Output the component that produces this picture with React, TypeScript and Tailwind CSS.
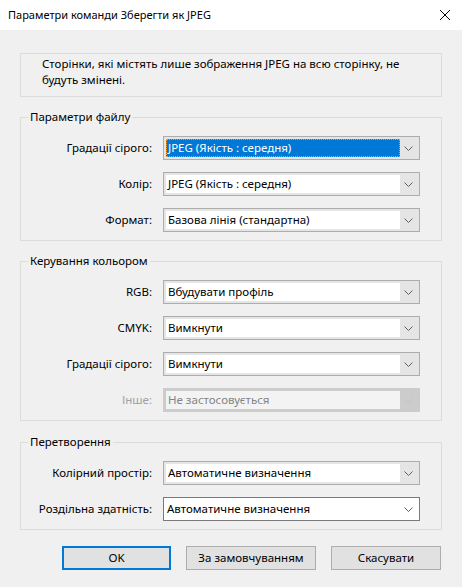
import React from 'react'

type Kind = 'normal' | 'focused' | 'disabled' | 'edit'

const font = { fontFamily: '"Segoe UI", "Noto Sans", sans-serif' }

// little down chevron used by every combo box
const Chevron = ({ color }: { color: string }) => (
  <svg width="9" height="5" viewBox="0 0 9 5" className="block">
    <path d="M0.5 0.5 L4.5 4.5 L8.5 0.5" fill="none" stroke={color} strokeWidth="1" />
  </svg>
)

const Combo = ({ value, kind = 'normal' }: { value: string; kind?: Kind }) => {
  if (kind === 'edit') {
    return (
      <div className="flex h-[24px] w-[257px] items-center border border-[#7a7a7a] bg-white">
        <span className="flex-1 pl-[3px] leading-[16px]">{value}</span>
        <span className="flex w-[21px] justify-center">
          <Chevron color="#606060" />
        </span>
      </div>
    )
  }

  const disabled = kind === 'disabled'
  return (
    <div
      className={
        disabled
          ? 'flex h-[24px] w-[257px] border border-[#cccccc] bg-[#cccccc] p-[2px]'
          : 'flex h-[24px] w-[257px] border border-[#adadad] bg-[#e5e5e5] p-[2px]'
      }
    >
      {kind === 'focused' ? (
        <span className="flex h-full w-[234px] items-center border border-dotted border-[#f39a3a] bg-[#0078d7] pl-[1px] leading-[16px] text-white">
          {value}
        </span>
      ) : (
        <span
          className={
            disabled
              ? 'flex h-full w-[234px] items-center bg-[#f3f3f3] pl-[2px] leading-[16px] text-[#838383]'
              : 'flex h-full w-[234px] items-center bg-white pl-[2px] leading-[16px]'
          }
        >
          {value}
        </span>
      )}
      <span className="flex flex-1 items-center justify-center">
        <Chevron color={disabled ? '#c4c4c4' : '#606060'} />
      </span>
    </div>
  )
}

const Row = ({ label, value, kind, dim }: { label: string; value: string; kind?: Kind; dim?: boolean }) => (
  <div className="flex items-center">
    <span className={dim ? 'w-[131px] text-right text-[#a0a0a0]' : 'w-[131px] text-right'}>{label}</span>
    <span className="ml-[11px]">
      <Combo value={value} kind={kind} />
    </span>
  </div>
)

const Group = ({ title, className, children }: { title: string; className: string; children: React.ReactNode }) => (
  <fieldset className={'border border-[#dcdcdc] ' + className}>
    <legend className="ml-[7px] px-[2px] leading-[16px]">{title}</legend>
    <div className="flex flex-col gap-[12px] pt-[11px] pb-[8px]">{children}</div>
  </fieldset>
)

const Button = ({ label, width, primary }: { label: string; width: string; primary?: boolean }) => (
  <button
    className={
      primary
        ? `h-[24px] ${width} border-2 border-[#0078d7] bg-[#e1e1e1]`
        : `h-[24px] ${width} border border-[#adadad] bg-[#e1e1e1]`
    }
  >
    {label}
  </button>
)

export default function App() {
  return (
    <div className="h-[587px] w-[462px] bg-[#f0f0f0] text-[11.5px] text-black" style={font}>
      {/* title bar */}
      <div className="flex h-[30px] items-center justify-between bg-white pl-[8px] pr-[8px] text-[11px]">
        <span>Параметри команди Зберегти як JPEG</span>
        <svg width="10" height="10" viewBox="0 0 10 10" className="mr-[4px]">
          <path d="M0 0 L10 10 M10 0 L0 10" stroke="#000" strokeWidth="1" />
        </svg>
      </div>

      <div className="flex flex-col px-[20px]">
        <div className="mt-[23px] h-[44px] border border-[#dcdcdc] pt-[2px] pl-[21px] leading-[16px]">
          Сторінки, які містять лише зображення JPEG на всю сторінку, не
          <br />
          будуть змінені.
        </div>

        <Group title="Параметри файлу" className="mt-[12px]">
          <Row label="Градації сірого:" value="JPEG (Якість : середня)" kind="focused" />
          <Row label="Колір:" value="JPEG (Якість : середня)" />
          <Row label="Формат:" value="Базова лінія (стандартна)" />
        </Group>

        <Group title="Керування кольором" className="mt-[12px]">
          <Row label="RGB:" value="Вбудувати профіль" />
          <Row label="CMYK:" value="Вимкнути" />
          <Row label="Градації сірого:" value="Вимкнути" />
          <Row label="Інше:" value="Не застосовується" kind="disabled" dim />
        </Group>

        <Group title="Перетворення" className="mt-[13px]">
          <Row label="Колірний простір:" value="Автоматичне визначення" />
          <Row label="Роздільна здатність:" value="Автоматичне визначення" kind="edit" />
        </Group>

        <div className="mt-[16px] flex justify-end gap-[15px] pr-[1px]">
          <Button label="OK" width="w-[109px]" primary />
          <Button label="За замовчуванням" width="w-[130px]" />
          <Button label="Скасувати" width="w-[110px]" />
        </div>
      </div>
    </div>
  )
}
